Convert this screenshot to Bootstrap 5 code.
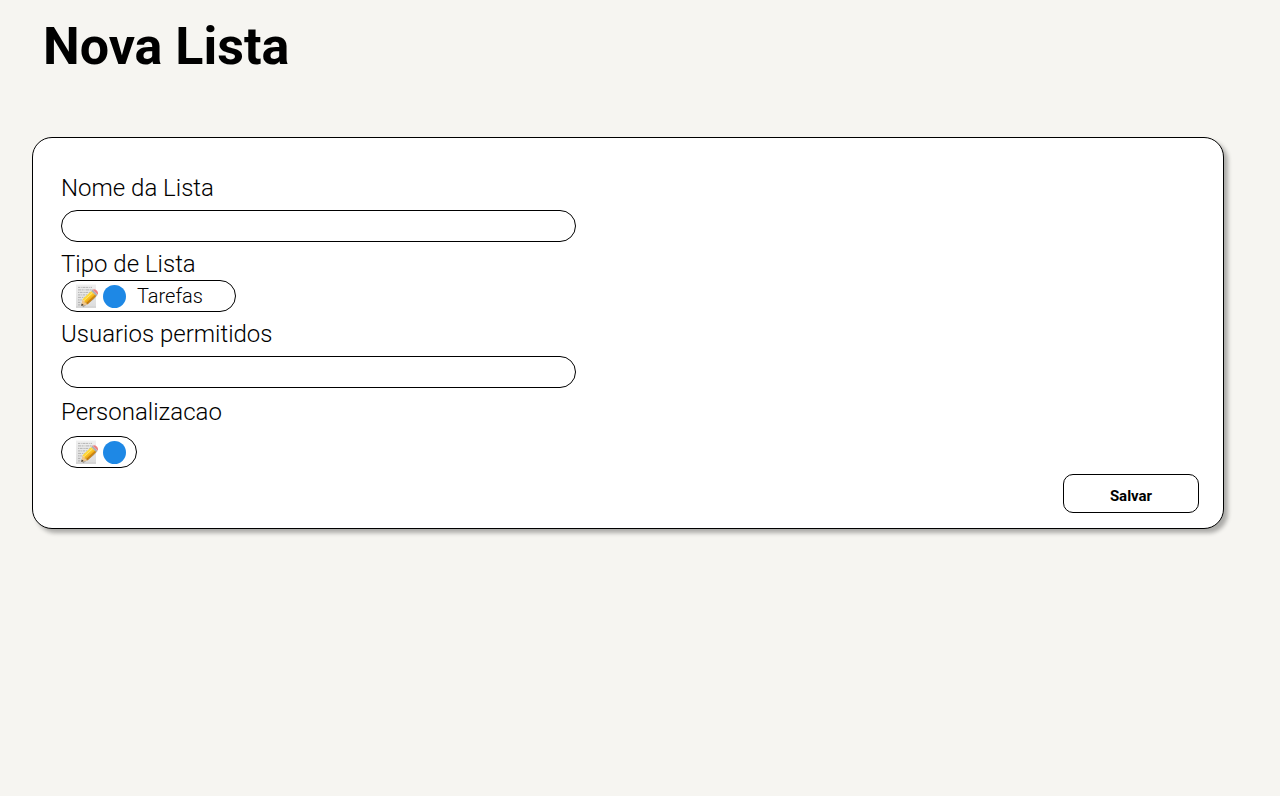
<!DOCTYPE html>
<html lang="pt-BR">
<head>
<meta charset="utf-8">
<meta name="viewport" content="width=device-width, initial-scale=1">
<title>Nova Lista</title>
<link rel="stylesheet" href="https://cdn.jsdelivr.net/npm/bootstrap@5.3.0/dist/css/bootstrap.min.css">
<style>
  body { background: #f6f5f1; color: #000; font-family: Roboto, "Liberation Sans", sans-serif; }
  .page { padding: 17px 56px 32px 32px; }
  .page-title { font-size: 52px; line-height: 60px; margin: 0 11px 60px; }
  .list-panel { border: 1px solid #000; border-radius: 20px; box-shadow: 4px 4px 4px rgba(0, 0, 0, .3); padding: 36px 24px 15px 28px; }
  .field-label { font-size: 24px; line-height: 28px; font-weight: 300; }
  .field-box { height: 32px; border: 1px solid #000; border-radius: 16px; background: #fff; color: #000; }
  .text-box { max-width: 515px; padding: 0 14px; font-weight: 300; }
  .picker { padding: 0 10px 0 12px; gap: 5px; font-size: 20px; line-height: 24px; font-weight: 300; }
  .picker-wide { width: 175px; }
  .picker-text { padding-left: 6px; }
  .swatch { width: 23px; height: 23px; border-radius: 50%; background: #1e88e5; }
  .fields { gap: 8px; }
  .stack-tight { gap: 2px; }
  .stack-wide { gap: 10px; padding-top: 2px; }
  .save-row { margin-top: 6px; }
  .save-btn { width: 136px; height: 39px; padding: 4px 0 0; border: 1px solid #000; border-radius: 10px; background: #fff; color: #000; font-size: 15px; line-height: 16px; font-weight: 700; }
</style>
</head>
<body>
<svg class="position-absolute" width="0" height="0" aria-hidden="true">
  <defs>
    <linearGradient id="paper" x1="0" y1="0" x2="0" y2="1"><stop offset="0" stop-color="#f0f0f0"/><stop offset="1" stop-color="#dcdcdc"/></linearGradient>
    <linearGradient id="wood" gradientUnits="userSpaceOnUse" x1="13" y1="12" x2="17" y2="17"><stop offset="0" stop-color="#ffdc3c"/><stop offset=".5" stop-color="#f9b91c"/><stop offset="1" stop-color="#c97e10"/></linearGradient>
  </defs>
  <symbol id="memo" viewBox="0 0 24 24">
    <path d="M2 .5h20v23H2z" fill="url(#paper)"/>
    <path d="M2 23.2h20" stroke="#c0c0c0" stroke-width=".7"/>
    <g stroke="#a5a5a5" stroke-width=".8" fill="none">
      <path d="M4 3.4h14" stroke-dasharray="2 .7 1 .8 3 .6"/>
      <path d="M4 5.9h15" stroke-dasharray="3 .6 2 .9 1 .5"/>
      <path d="M4 8.4h12" stroke-dasharray="1.4 .6 2.6 .8"/>
      <path d="M4 10.9h11" stroke-dasharray="2.5 .7 1 .6"/>
      <path d="M4 13.4h8" stroke-dasharray="3 .8 1.5 .6"/>
      <path d="M4 15.9h4" stroke-dasharray="1.6 .6"/>
      <path d="M4 18.4h3M4 20.9h5" stroke-dasharray="2 .7"/>
    </g>
    <path d="M8.5 22.2l10.5-7.8 3.5-4" stroke="#000" stroke-opacity=".25" stroke-width="2.5" fill="none"/>
    <path d="M7.3 22l1-6.6 5.2 5z" fill="#efc58b"/>
    <path d="M7.3 22l.4-2.6 2 1.7z" fill="#39342e"/>
    <path d="M8.3 15.4l8.9-8.3 5.1 4.9-8.8 8.4-1.2-1.6-1.8-.2-.2-1.8z" fill="url(#wood)"/>
    <path d="M10 16.6l8.8-8" stroke="#ffe87a" stroke-width=".9"/>
    <path d="M12.7 19.4l8.9-8.3" stroke="#b56f0c" stroke-width=".8"/>
    <path d="M17.2 7.1l1.4-1.3 5 4.8-1.3 1.4z" fill="#abb1b6"/>
    <path d="M18.6 5.8c1-.9 2.8-.7 4.1.6s1.8 3.1.9 4.2z" fill="#ee8080"/>
  </symbol>
</svg>
<main class="page">
  <h1 class="page-title fw-bold">Nova Lista</h1>
  <form class="list-panel bg-white">
    <div class="fields d-flex flex-column">
      <div class="d-flex flex-column align-items-start gap-2">
        <label class="field-label" for="nome">Nome da Lista</label>
        <input class="field-box text-box w-100" id="nome" type="text">
      </div>
      <div class="stack-tight d-flex flex-column align-items-start">
        <label class="field-label" for="tipo">Tipo de Lista</label>
        <button class="field-box picker picker-wide d-flex align-items-center" id="tipo" type="button">
          <svg width="24" height="24" aria-hidden="true"><use href="#memo"/></svg>
          <span class="swatch"></span>
          <span class="picker-text">Tarefas</span>
        </button>
      </div>
      <div class="d-flex flex-column align-items-start gap-2">
        <label class="field-label" for="usuarios">Usuarios permitidos</label>
        <input class="field-box text-box w-100" id="usuarios" type="text">
      </div>
      <div class="stack-wide d-flex flex-column align-items-start">
        <label class="field-label" for="personalizacao">Personalizacao</label>
        <button class="field-box picker d-flex align-items-center" id="personalizacao" type="button">
          <svg width="24" height="24" aria-hidden="true"><use href="#memo"/></svg>
          <span class="swatch"></span>
        </button>
      </div>
    </div>
    <div class="save-row d-flex justify-content-end">
      <button class="save-btn" type="submit">Salvar</button>
    </div>
  </form>
</main>
<script src="https://cdn.jsdelivr.net/npm/bootstrap@5.3.0/dist/js/bootstrap.bundle.min.js"></script>
</body>
</html>
